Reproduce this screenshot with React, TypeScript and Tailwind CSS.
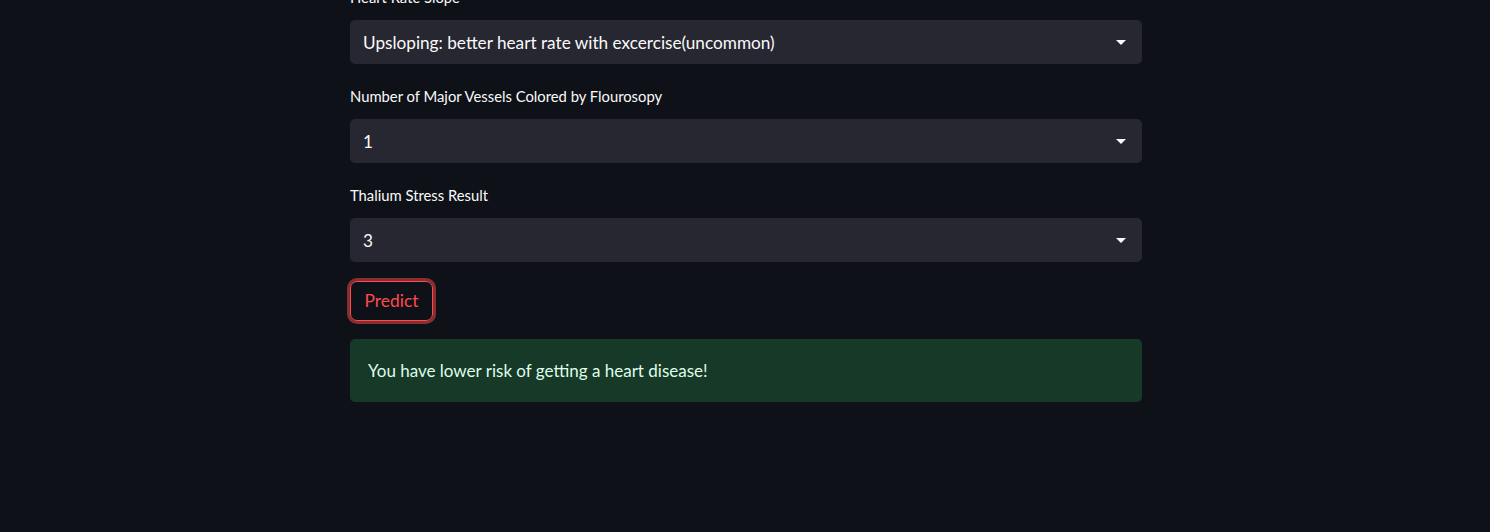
const font = "font-['Lato','Liberation_Sans',sans-serif]";

interface SelectProps {
  label: string;
  value: string;
}

const fields: SelectProps[] = [
  { label: "Heart Rate Slope", value: "Upsloping: better heart rate with excercise(uncommon)" },
  { label: "Number of Major Vessels Colored by Flourosopy", value: "1" },
  { label: "Thalium Stress Result", value: "3" },
];

const Caret = () => (
  <svg width="10" height="5" viewBox="0 0 10 5" className="shrink-0">
    <path d="M0 0h10L5 5z" fill="#fafafa" />
  </svg>
);

const SelectBox = ({ label, value }: SelectProps) => {
  return (
    <div className="flex flex-col">
      <div className="h-6 leading-6 text-[14.8px] text-[#fafafa] mb-[11px]">{label}</div>
      <div className="h-[44px] bg-[#262730] rounded-[5px] flex items-center justify-between pl-[13px] pr-4">
        <span className="text-[17.2px] text-[#fafafa] pt-[1px]">{value}</span>
        <Caret />
      </div>
    </div>
  );
};

export default function App() {
  return (
    <div className={`min-h-[532px] w-full bg-[#0e1117] ${font} overflow-hidden`}>
      <div className="w-[792px] ml-[350px] -mt-[15px] flex flex-col gap-5">
        {fields.map((f, i) => (
          <SelectBox key={"field-" + i} {...f} />
        ))}
      </div>
      <div className="ml-[350px] mt-[19px]">
        <button className="h-10 w-[83px] rounded-[7px] border border-[#ff4b4b] ring-[3px] ring-[#ff4b4b]/50 text-[#ff4b4b] text-[17.4px] bg-transparent">
          Predict
        </button>
      </div>
      <div className="w-[792px] ml-[350px] mt-[18px] h-[63px] rounded-[5px] bg-[#173928] flex items-center px-[18px]">
        <span className="text-[17px] text-[#dffde9] pt-[1px]">You have lower risk of getting a heart disease!</span>
      </div>
    </div>
  );
}
